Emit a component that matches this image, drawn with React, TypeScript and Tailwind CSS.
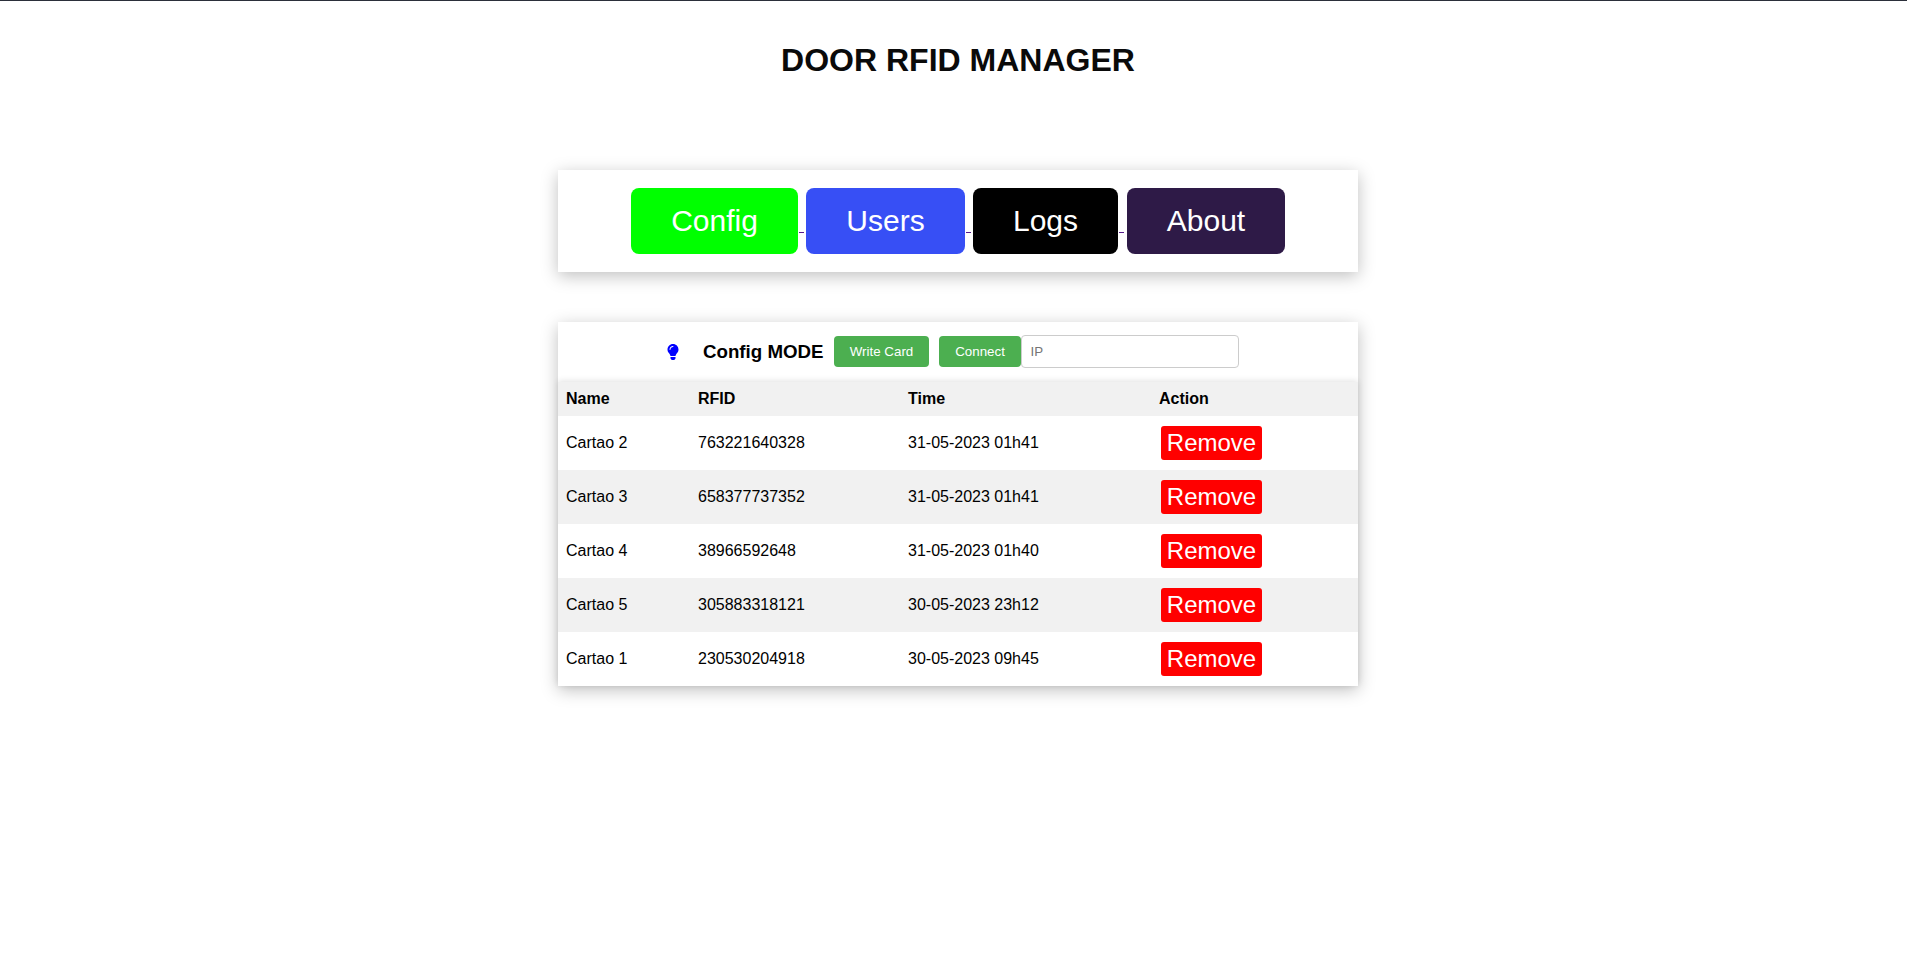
import { FaLightbulb } from 'react-icons/fa'

const cards = [
  { name: 'Cartao 2', rfid: '763221640328', time: '31-05-2023 01h41' },
  { name: 'Cartao 3', rfid: '658377737352', time: '31-05-2023 01h41' },
  { name: 'Cartao 4', rfid: '38966592648', time: '31-05-2023 01h40' },
  { name: 'Cartao 5', rfid: '305883318121', time: '30-05-2023 23h12' },
  { name: 'Cartao 1', rfid: '230530204918', time: '30-05-2023 09h45' },
]

const cardShadow = 'shadow-[0_4px_16px_0_rgba(0,0,0,0.25)]'

function NavDash() {
  return <span className="w-[5px] h-px ml-px mr-[2px] mt-[44px] bg-[#551a8b] shrink-0" />
}

function NavButton({ label, className }: { label: string; className: string }) {
  return (
    <button className={`h-[66px] pb-[2px] rounded-lg text-[30px] text-white ${className}`}>
      {label}
    </button>
  )
}

export default function App() {
  return (
    <div className="min-h-[979px] bg-white border-t border-[#2b2f3a] pl-[9px] text-black font-['Liberation_Sans',Arial,sans-serif]">
      <h1 className="pt-[41px] h-[169px] text-center text-[32px] leading-[37px] font-bold text-[#0a0a0a]">
        DOOR RFID MANAGER
      </h1>

      <div className={`mx-auto w-[800px] h-[102px] pt-[18px] bg-white flex justify-center ${cardShadow}`}>
        <NavButton label="Config" className="w-[167px] bg-[#00ff00]" />
        <NavDash />
        <NavButton label="Users" className="w-[159px] bg-[#374ff5]" />
        <NavDash />
        <NavButton label="Logs" className="w-[145px] bg-black" />
        <NavDash />
        <NavButton label="About" className="ml-px w-[158px] bg-[#2e1a47]" />
      </div>

      <div className={`mx-auto mt-[50px] w-[800px] bg-white ${cardShadow}`}>
        <div className="h-[60px] pb-px flex items-center pl-[107px]">
          <FaLightbulb className="text-[#0000ff] text-base" />
          <h3 className="ml-[22px] mt-px text-[18.72px] font-bold">Config MODE</h3>
          <button className="ml-[10px] w-[95px] h-[31px] pl-px rounded bg-[#4caf50] text-[13.33px] text-white">
            Write Card
          </button>
          <button className="ml-[10px] w-[82px] h-[31px] pl-px rounded bg-[#4caf50] text-[13.33px] text-white">
            Connect
          </button>
          <input
            placeholder="IP"
            className="w-[218px] h-[33px] px-[9px] border border-[#ccc] rounded text-[13.33px] outline-none placeholder:text-[#757575]"
          />
        </div>

        <table className="w-full table-fixed border-collapse text-base shadow-[0_-1px_6px_0_rgba(0,0,0,0.12)]">
          <colgroup>
            <col className="w-[132px]" />
            <col className="w-[210px]" />
            <col className="w-[251px]" />
            <col />
          </colgroup>
          <thead>
            <tr className="h-[34px] bg-[#f1f1f1] text-left">
              <th className="px-2 font-bold">Name</th>
              <th className="px-2 font-bold">RFID</th>
              <th className="px-2 font-bold">Time</th>
              <th className="px-2 font-bold">Action</th>
            </tr>
          </thead>
          <tbody>
            {cards.map((card, i) => (
              <tr key={card.name} className={`h-[54px] ${i % 2 === 1 ? 'bg-[#f1f1f1]' : 'bg-white'}`}>
                <td className="px-2">{card.name}</td>
                <td className="px-2">{card.rfid}</td>
                <td className="px-2">{card.time}</td>
                <td className="px-2">
                  <button className="block ml-[2px] w-[101px] h-[34px] rounded-[3px] bg-[#ff0000] text-2xl text-white">
                    Remove
                  </button>
                </td>
              </tr>
            ))}
          </tbody>
        </table>
      </div>
    </div>
  )
}
